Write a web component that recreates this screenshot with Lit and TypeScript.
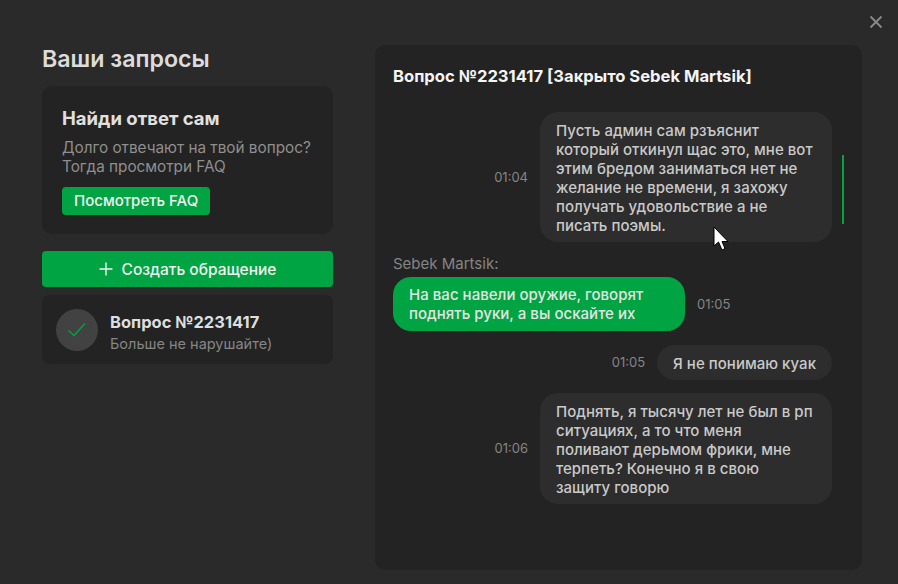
import { LitElement, html, css } from 'lit';
import { customElement } from 'lit/decorators.js';

const messages = [
  { own: true, time: '01:04', lines: ['Пусть админ сам рзъяснит', 'который откинул щас это, мне вот', 'этим бредом заниматься нет не', 'желание не времени, я захожу', 'получать удовольствие а не', 'писать поэмы.'] },
  { own: false, author: 'Sebek Martsik:', time: '01:05', lines: ['На вас навели оружие, говорят', 'поднять руки, а вы оскайте их'] },
  { own: true, time: '01:05', lines: ['Я не понимаю куак'] },
  { own: true, time: '01:06', lines: ['Поднять, я тысячу лет не был в рп', 'ситуациях, а то что меня', 'поливают дерьмом фрики, мне', 'терпеть? Конечно я в свою', 'защиту говорю'] },
];

@customElement('app-root')
export class AppRoot extends LitElement {
  static styles = css`
    :host {
      display: block;
      width: 898px;
      height: 584px;
      background: #2a2a2a;
      font-family: 'Inter', 'Noto Sans', sans-serif;
      position: relative;
      overflow: hidden;
    }
    .page {
      display: flex;
      gap: 42px;
      padding: 45px 36px 14px 42px;
      height: 584px;
      box-sizing: border-box;
    }
    .left {
      width: 291px;
      flex: none;
      display: flex;
      flex-direction: column;
    }
    h1 {
      margin: 0 0 12px;
      font-size: 23.2px;
      line-height: 29px;
      font-weight: 600;
      color: #dcdcdc;
    }
    .faq {
      background: #232323;
      border-radius: 10px;
      height: 148px;
      box-sizing: border-box;
      padding: 21px 20px;
    }
    .faq h2 {
      margin: 0 0 9px;
      font-size: 18.5px;
      line-height: 22px;
      font-weight: 700;
      color: #e0e0e0;
    }
    .faq p {
      margin: 0 0 11px;
      font-size: 15.3px;
      line-height: 19px;
      color: #8f8f8f;
    }
    .faq-btn {
      display: inline-block;
      background: #00a442;
      color: #f2f2f2;
      border-radius: 4px;
      font-size: 15px;
      font-weight: 500;
      line-height: 28px;
      padding: 0 12px;
    }
    .create {
      margin-top: 17px;
      height: 36px;
      background: #00a442;
      border-radius: 4px;
      display: flex;
      align-items: center;
      justify-content: center;
      gap: 9px;
      color: #f2f2f2;
      font-size: 15.5px;
      font-weight: 500;
    }
    .create svg { display: block; }
    .ticket {
      margin-top: 8px;
      height: 69px;
      background: #232323;
      border-radius: 8px;
      display: flex;
      align-items: center;
      gap: 12px;
      padding-left: 14px;
    }
    .avatar {
      width: 42px;
      height: 42px;
      border-radius: 50%;
      background: #424242;
      display: flex;
      align-items: center;
      justify-content: center;
    }
    .ticket-text { padding-top: 5px; }
    .ticket b {
      display: block;
      font-size: 16.5px;
      line-height: 21px;
      font-weight: 700;
      color: #dedede;
    }
    .ticket span {
      display: block;
      margin-top: 2px;
      font-size: 14.5px;
      line-height: 18px;
      color: #858585;
    }
    .panel {
      flex: 1;
      background: #232323;
      border-radius: 10px;
      padding: 21px 30px 0 18px;
      position: relative;
    }
    .panel h2 {
      margin: 0 0 25px;
      font-size: 16.6px;
      line-height: 21px;
      font-weight: 700;
      color: #f4f4f4;
      white-space: nowrap;
    }
    .row {
      display: flex;
      align-items: center;
      margin-bottom: 13.5px;
    }
    .row.own { justify-content: flex-end; }
    .row.other { margin-bottom: 14.5px; }
    .time {
      font-size: 13px;
      color: #858585;
      line-height: 18px;
    }
    .own .time { margin-right: 12px; }
    .other .time { margin-left: 12px; }
    .bubble {
      box-sizing: border-box;
      border-radius: 18px;
      padding: 9px 16px 6.5px;
      font-size: 15px;
      font-weight: 500;
      letter-spacing: 0.03px;
      line-height: 19px;
      white-space: nowrap;
      background: #2d2d2d;
      color: #c9c9c9;
    }
    .bubble.wide { width: 292px; }
    .other .bubble {
      padding: 8px 16px 7.5px;
      background: #00a442;
      color: #e4e4e4;
    }
    .author {
      font-size: 15px;
      line-height: 17px;
      color: #858585;
      margin-bottom: 5px;
    }
    .scroll {
      position: absolute;
      left: 467px;
      top: 110px;
      width: 2px;
      height: 69px;
      background: #00a442;
    }
    .close {
      position: absolute;
      left: 869px;
      top: 15px;
      display: block;
    }
    .cursor {
      position: absolute;
      left: 713px;
      top: 226px;
      display: block;
    }
  `;

  renderMessage(m: (typeof messages)[number]) {
    const time = html`<span class="time">${m.time}</span>`;
    const bubble = html`<div class="bubble ${m.lines.length > 1 ? 'wide' : ''}">
      ${m.lines.map((l, i) => html`${i ? html`<br />` : ''}${l}`)}
    </div>`;
    return html`
      ${m.author ? html`<div class="author">${m.author}</div>` : ''}
      <div class="row ${m.own ? 'own' : 'other'}">
        ${m.own ? html`${time}${bubble}` : html`${bubble}${time}`}
      </div>
    `;
  }

  render() {
    return html`
      <div class="page">
        <div class="left">
          <h1>Ваши запросы</h1>
          <div class="faq">
            <h2>Найди ответ сам</h2>
            <p>Долго отвечают на твой вопрос?<br />Тогда просмотри FAQ</p>
            <span class="faq-btn">Посмотреть FAQ</span>
          </div>
          <div class="create">
            <svg width="14" height="14" viewBox="0 0 14 14"><path d="M7 .5v13M.5 7h13" stroke="#f2f2f2" stroke-width="1.4" fill="none" /></svg>
            Создать обращение
          </div>
          <div class="ticket">
            <div class="avatar">
              <svg width="20" height="15" viewBox="0 0 20 15"><path d="M1.500 8.500l5.500 5L18 1.500" stroke="#00a442" stroke-width="1.300" fill="none" /></svg>
            </div>
            <div class="ticket-text">
              <b>Вопрос №2231417</b>
              <span>Больше не нарушайте)</span>
            </div>
          </div>
        </div>
        <div class="panel">
          <h2>Вопрос №2231417 [Закрыто Sebek Martsik]</h2>
          ${messages.map((m) => this.renderMessage(m))}
          <div class="scroll"></div>
        </div>
      </div>
      <svg class="close" width="14" height="14" viewBox="0 0 14 14"><path d="M1.500 1.500l11 11M12.500 1.500l-11 11" stroke="#8a8a8a" stroke-width="1.800" fill="none" /></svg>
      <svg class="cursor" width="17" height="26" viewBox="0 0 17 26"><path d="M1 1v19l4.500-4L9 24l3-1.500-3-7h6z" fill="#fff" stroke="#000" stroke-width="1" /></svg>
    `;
  }
}
